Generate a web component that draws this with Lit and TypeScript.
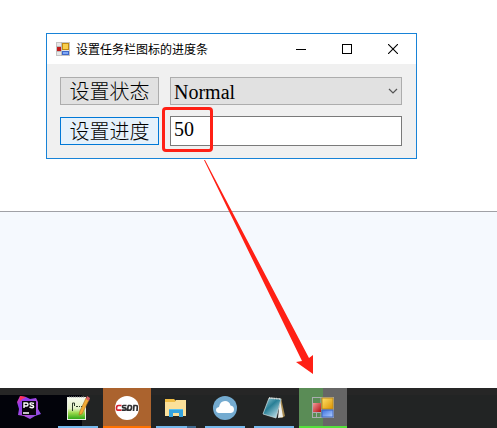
import { LitElement, html, css, svg } from "lit";
import { customElement, property, state } from "lit/decorators.js";
import { classMap } from "lit/directives/class-map.js";

const formIcon = svg`
  <rect x="0.5" y="0.5" width="21" height="20" fill="none" stroke="#a9adb0"/>
  <path d="M9 0V21M0 6.5H9M0 15.5H9M4.5 15V21M9 12.5H22" stroke="#a9adb0" fill="none"/>
  <rect x="1" y="6" width="8" height="9" fill="url(#red)"/>
  <rect x="10" y="1" width="11" height="11" fill="url(#gold)" stroke="#b98a1c"/>
  <rect x="10" y="13" width="11" height="7" fill="url(#blue)" stroke="#3f66c0"/>
  <defs>
    <linearGradient id="red" x2="1" y2="1"><stop stop-color="#f19a98"/><stop offset="1" stop-color="#b20d12"/></linearGradient>
    <linearGradient id="gold" x2="1" y2="1"><stop stop-color="#ffe06a"/><stop offset="1" stop-color="#dc9200"/></linearGradient>
    <linearGradient id="blue" x2="1" y2="1"><stop stop-color="#3a70e0"/><stop offset="1" stop-color="#b4d0ff"/></linearGradient>
  </defs>`;

const titleIcon = svg`
  <rect x="0.5" y="0.5" width="13" height="13" fill="#e6e6e6" stroke="#c4c4c4"/>
  <path d="M5.5 0V14M0 4.5H5M0 9.5H5" stroke="#bbb" fill="none"/>
  <rect x="1" y="5" width="4" height="4" fill="#c51a1a"/>
  <rect x="6.5" y="1.5" width="6" height="6" fill="#f8cf4c" stroke="#c08a14"/>
  <rect x="6.5" y="9.5" width="6" height="3" fill="#7fa8f5" stroke="#3f68c8"/>`;

const icons: Record<string, unknown> = {
  storm: svg`
    <defs><linearGradient id="storm" x2="1" y2="1"><stop stop-color="#ff3c8e"/><stop offset="0.25" stop-color="#8a3cf0"/><stop offset="0.6" stop-color="#b150d8"/><stop offset="1" stop-color="#7a48f0"/></linearGradient></defs>
    <path d="M3 0L9 1L13 3L19 2L21 6L21 13L24 18L18 20L13 23L7 20L1 19L2 13L0 6Z" fill="url(#storm)"/>
    <path d="M3 0L9 1L5 3L3 5Z" fill="#ff3158"/>
    <rect x="5" y="5" width="14" height="14" fill="#08040d"/>
    <path d="M7 12V7H9.5Q11 7 11 8.5T9.5 10H7M17 7.5Q13 6 13 8Q13 9 15 9.3T16.5 11Q15.500 12.500 12.500 11M6 17H12" fill="none" stroke="#fff" stroke-width="1.4"/>`,
  editor: svg`
    <defs><linearGradient id="page" x2="0" y2="1"><stop stop-color="#f6f9ee"/><stop offset="0.5" stop-color="#e3f2c6"/><stop offset="0.7" stop-color="#9ad94c"/><stop offset="1" stop-color="#27a312"/></linearGradient></defs>
    <rect x="1.500" y="1.500" width="18" height="22" fill="url(#page)" stroke="#e9eee4"/>
    <path d="M3 1H19" stroke="#999" stroke-dasharray="1 1"/>
    <path d="M6.500 15V7H8.500V10M10 10.500H12M13 10.500H14M15 10.500H17" fill="none" stroke="#2b3a29"/>
    <path d="M20 2L23 4L16 18L13 19L14 15Z" fill="#f2ab35" stroke="#a86b1c" stroke-width="0.6"/>
    <path d="M21 0L24 2L23 5L20 3Z" fill="#d75d63"/>`,
  csdn: svg`
    <circle cx="12" cy="12" r="12" fill="#fff"/>
    <g fill="none" stroke-width="1.700">
      <path d="M6.500 9.500H3.500Q1.500 9.500 1.500 12T3 14.200H6.500" stroke="#d7232e"/>
      <path d="M11.500 9.500H8.500Q7.500 9.500 7.500 11Q7.500 11.800 9 11.800H10Q11 11.800 11 13T10 14.200H6.800M13 9.500H15Q17 9.500 16.500 12T14 14.200H12.500L13.300 9.500M18.500 15L19 9.500H21Q22.500 9.500 22.300 11L22 15" stroke="#303032"/>
    </g>`,
  folder: svg`
    <path d="M1 3H10L12 5H22V20H1Z" fill="#f0bd45"/>
    <path d="M1 6H11L12 4H22V20H1Z" fill="#fbe09a"/>
    <path d="M5 13H19V21H15V17H9V21H5Z" fill="#35a3de"/>
    <path d="M5 13H19V14H5Z" fill="#5cc2ef"/>`,
  cloud: svg`
    <circle cx="12" cy="12" r="12" fill="#74abd0"/>
    <path d="M6 17Q3 16.500 3 14Q3 11.500 6 11Q7 5 12 5Q16.500 5 17.500 9.500Q21 10 21 13.500Q21 16.500 18 17Z" fill="#fff"/>`,
  notes: svg`
    <defs><linearGradient id="glass" x2="0.8" y2="1"><stop stop-color="#a7d5df"/><stop offset="0.45" stop-color="#287f96"/><stop offset="1" stop-color="#c6e4ed"/></linearGradient></defs>
    <path d="M19 2L23 20L20 22L17 21Z" fill="#a68a50"/>
    <path d="M18 3L21 21L16 22Z" fill="#eef0ec"/>
    <path d="M7 2L19 3L14 22L1 18Z" fill="url(#glass)" stroke="#d4e2e4" stroke-width="0.700"/>
    <path d="M7 2L19 3" stroke="#d9dedb" stroke-width="1.600" stroke-dasharray="1 0.700"/>`,
  form: svg`<g transform="translate(1 1)">${formIcon}</g>`,
};

@customElement("form-window")
export class FormWindow extends LitElement {
  static styles = css`
    :host { display: block; border: 1px solid #1883d7; background: #f0f0f0; color: #000; }
    .title-bar { display: flex; align-items: center; height: 30px; background: #fff; padding-left: 9px; }
    .title { flex: 1; margin: 0 0 0 6px; font: 12px/16px "Noto Sans CJK SC", sans-serif; white-space: nowrap; }
    .caption { width: 46px; height: 30px; padding: 0; border: 0; background: none; display: grid; place-items: center; }
    svg { display: block; }
    .fields { display: grid; grid-template-columns: 99px 1fr; gap: 10px 11px; align-items: center; padding: 12px 14px 12px 13px; }
    .action { height: 28px; padding: 0; border: 1px solid #adadad; background: #e1e1e1; color: #000; font: 300 20px/24px "Noto Sans CJK SC", sans-serif; white-space: nowrap; }
    .active { border-color: #0078d7; background: #e5f1fb; }
    .field { position: relative; display: grid; align-items: center; height: 30px; }
    select, input { box-sizing: border-box; width: 100%; min-width: 0; margin: 0; border-radius: 0; outline: 0; color: #000; font: 20px/24px "Liberation Serif", serif; }
    select { appearance: none; height: 28px; border: 1px solid #adadad; background: #e1e1e1; padding: 2px 24px 0 3px; }
    input { height: 30px; border: 1px solid #7a7a7a; background: #fff; padding: 0 3px 3px; }
    .chevron { position: absolute; right: 4px; pointer-events: none; }
    .marker { position: absolute; left: -8px; top: -9px; width: 51px; height: 45px; box-sizing: border-box; border: 3px solid #ff2015; border-radius: 4px; pointer-events: none; }
  `;

  @state() private status = "Normal";
  @state() private progress = "50";

  render() {
    return html`
      <header class="title-bar">
        <svg width="14" height="14" aria-hidden="true">${titleIcon}</svg>
        <h1 class="title">设置任务栏图标的进度条</h1>
        <button class="caption" aria-label="最小化"><svg width="10" height="10"><path d="M0 5.5H10" stroke="#000"/></svg></button>
        <button class="caption" aria-label="最大化"><svg width="10" height="10"><rect x="0.5" y="0.5" width="9" height="9" fill="none" stroke="#000"/></svg></button>
        <button class="caption" aria-label="关闭"><svg width="10" height="10"><path d="M0 0L10 10M10 0L0 10" stroke="#000" stroke-width="1.1"/></svg></button>
      </header>
      <div class="fields">
        <button class="action" id="set-status">设置状态</button>
        <div class="field">
          <select aria-labelledby="set-status" .value=${this.status}
            @change=${(e: Event) => (this.status = (e.target as HTMLSelectElement).value)}>
            <option>Normal</option><option>Paused</option><option>Error</option>
          </select>
          <svg class="chevron" width="10" height="6" aria-hidden="true"><path d="M1 1L5 5L9 1" fill="none" stroke="#555" stroke-width="1.2"/></svg>
        </div>
        <button class="action active" id="set-progress">设置进度</button>
        <div class="field">
          <input type="text" aria-labelledby="set-progress" .value=${this.progress}
            @input=${(e: Event) => (this.progress = (e.target as HTMLInputElement).value)}>
          <span class="marker"></span>
        </div>
      </div>`;
  }
}

interface TaskItem {
  icon: string;
  label: string;
  kind?: string;
}

@customElement("task-bar")
export class TaskBar extends LitElement {
  static styles = css`
    :host { display: flex; gap: 1px; height: 40px; padding-left: 5px;
      background: linear-gradient(#262626 7px, transparent 7px), linear-gradient(90deg, #02030a 82px, #222424 82px); }
    .task { position: relative; width: 48px; height: 40px; padding: 0; border: 0; background: none; display: grid; place-items: center; }
    .task svg { display: block; }
    .task::after { content: ""; position: absolute; bottom: 0; left: 4px; right: 4px; height: 2px; background: #76b9ed; }
    .idle::after { display: none; }
    .alert { background: #ab632e; }
    .alert::after { left: 0; right: 0; background: #ff7200; }
    .stacked::after { background: linear-gradient(90deg, #76b9ed 31px, #426b90 31px); }
    .busy { background: linear-gradient(90deg, #5a8c56 50%, #666 50%); }
    .busy::after { left: 0; right: 0; background: #54e13c; }
  `;

  @property({ attribute: false }) items: TaskItem[] = [];

  render() {
    return this.items.map(({ icon, label, kind = "open" }) => html`
      <button class=${classMap({ task: true, [kind]: true })} aria-label=${label}>
        <svg width="24" height="24" viewBox="0 0 24 24" aria-hidden="true">${icons[icon]}</svg>
      </button>`);
  }
}

@customElement("app-root")
export class AppRoot extends LitElement {
  static styles = css`
    :host { display: flex; flex-direction: column; position: relative; min-height: 100vh; background: #fff; }
    .stage { padding: 33px 80px 52px 46px; }
    .band { height: 128px; margin-bottom: 48px; border-top: 1px solid #a0a1a6; background: #f5f9fe; }
    .arrow { position: absolute; left: 204px; top: 160px; pointer-events: none; }
  `;

  private tasks: TaskItem[] = [
    { icon: "storm", label: "PhpStorm", kind: "idle" },
    { icon: "editor", label: "Notepad++" },
    { icon: "csdn", label: "CSDN", kind: "alert" },
    { icon: "folder", label: "文件资源管理器", kind: "stacked" },
    { icon: "cloud", label: "云盘" },
    { icon: "notes", label: "记事本" },
    { icon: "form", label: "设置任务栏图标的进度条", kind: "busy" },
  ];

  render() {
    return html`
      <main class="stage"><form-window></form-window></main>
      <div class="band"></div>
      <task-bar .items=${this.tasks}></task-bar>
      <svg class="arrow" width="110" height="214" aria-hidden="true">
        <path d="M0 0H1L105 198L109 195V214L92 202L98 201Z" fill="#ff2015"/>
      </svg>`;
  }
}
